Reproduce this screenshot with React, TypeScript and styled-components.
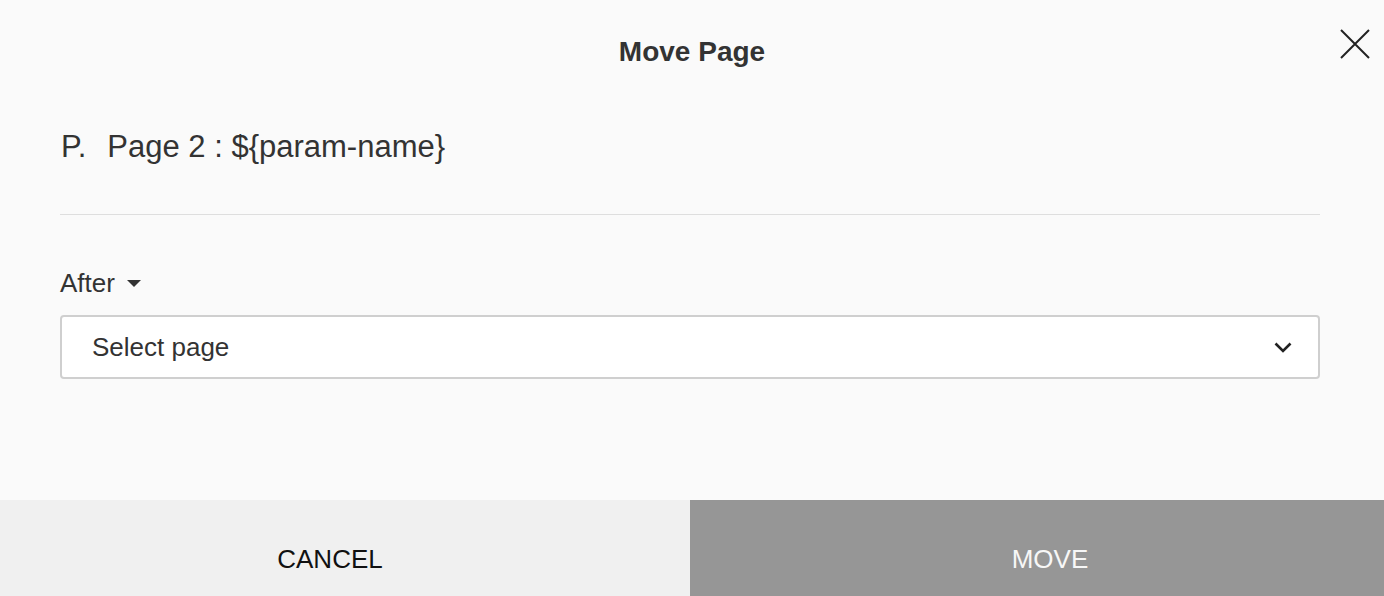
import React from "react";
import styled, { createGlobalStyle } from "styled-components";

const GlobalStyle = createGlobalStyle`
  html, body { margin: 0; padding: 0; background: #fafafa; }
  body { font-family: "Liberation Sans", Arial, Helvetica, sans-serif; }
`;

const Dialog = styled.div`
  position: relative;
  height: 596px;
  display: flex;
  flex-direction: column;
  background: #fafafa;
  color: #333;
`;

const Header = styled.header`
  padding-top: 38px;
  display: flex;
  justify-content: center;
`;

const Title = styled.h1`
  margin: 0;
  font-size: 28px;
  line-height: 28px;
  font-weight: 700;
  color: #333;
`;

const CloseButton = styled.button`
  position: absolute;
  top: 29px;
  left: 1340px;
  width: 30px;
  height: 30px;
  padding: 0;
  border: 0;
  background: transparent;
  cursor: pointer;
  display: flex;
`;

const Body = styled.main`
  flex: 1;
  padding: 0 64px 0 60px;
  display: flex;
  flex-direction: column;
`;

const PageRow = styled.div`
  margin-top: 66px;
  display: flex;
  gap: 21px;
  padding-left: 1px;
  font-size: 31px;
  line-height: 30px;
  color: #333;
`;

const Divider = styled.hr`
  margin: 52px 0 0;
  border: 0;
  height: 1px;
  background: #dedede;
`;

const AfterLabel = styled.div`
  margin-top: 55px;
  display: flex;
  align-items: center;
  gap: 12px;
  font-size: 26px;
  line-height: 26px;
  color: #333;
`;

const Caret = styled.span`
  width: 0;
  height: 0;
  border-left: 7px solid transparent;
  border-right: 7px solid transparent;
  border-top: 7px solid #333;
  margin-top: 1px;
`;

const SelectBox = styled.div`
  margin-top: 19px;
  height: 64px;
  box-sizing: border-box;
  border: 2px solid #cfcfcf;
  border-radius: 4px;
  background: #fff;
  display: flex;
  align-items: center;
  justify-content: space-between;
  padding: 0 26px 0 30px;
  font-size: 26px;
  color: #333;
`;

const Footer = styled.footer`
  height: 96px;
  display: grid;
  grid-template-columns: 690px 1fr;
`;

const FooterButton = styled.button<{ $primary?: boolean }>`
  border: 0;
  margin: 0;
  font-family: "Liberation Sans", Arial, sans-serif;
  font-size: 26px;
  padding: 22px ${(p) => (p.$primary ? "0 0 26px" : "30px 0 0")};
  background: ${(p) => (p.$primary ? "#969696" : "#f0f0f0")};
  color: ${(p) => (p.$primary ? "#f7f7f7" : "#111")};
  cursor: pointer;
`;

export default function App() {
  return (
    <>
      <GlobalStyle />
      <Dialog>
        <Header>
          <Title>Move Page</Title>
        </Header>
        <CloseButton aria-label="Close">
          <svg width="30" height="30" viewBox="0 0 30 30">
            <path d="M1 1 L29 29 M29 1 L1 29" stroke="#222" strokeWidth="2" fill="none" />
          </svg>
        </CloseButton>
        <Body>
          <PageRow>
            <span>P.</span>
            <span>Page 2 : ${"{param-name}"}</span>
          </PageRow>
          <Divider />
          <AfterLabel>
            After
            <Caret />
          </AfterLabel>
          <SelectBox>
            <span>Select page</span>
            <svg width="18" height="11" viewBox="0 0 18 11">
              <polyline points="1.5,1.5 9,9 16.5,1.5" stroke="#222" strokeWidth="2.6" fill="none" />
            </svg>
          </SelectBox>
        </Body>
        <Footer>
          <FooterButton>CANCEL</FooterButton>
          <FooterButton $primary>MOVE</FooterButton>
        </Footer>
      </Dialog>
    </>
  );
}
